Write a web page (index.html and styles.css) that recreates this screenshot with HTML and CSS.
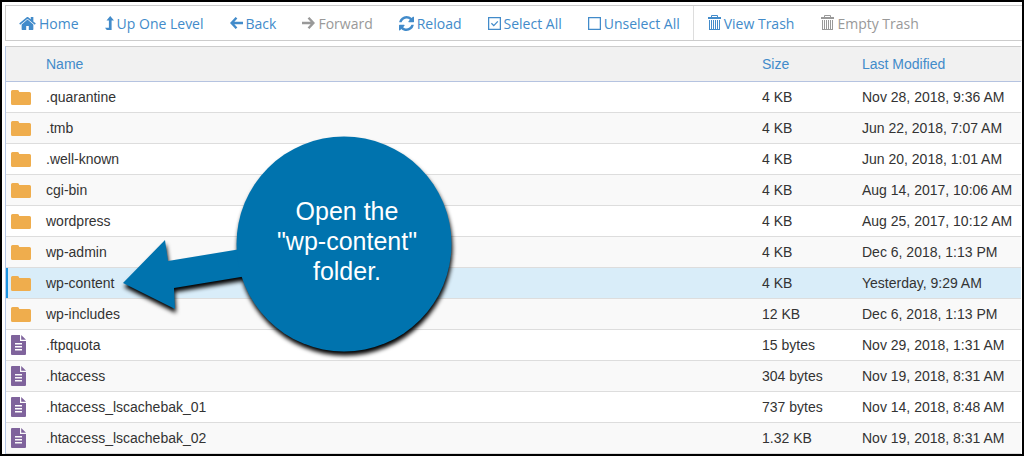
FILE: index.html
```
<!DOCTYPE html>
<html lang="en">
<head>
    <meta charset="UTF-8">
    <meta name="viewport" content="width=device-width, initial-scale=1.0">
    <title>File Manager</title>
    <link rel="stylesheet" href="styles.css">
</head>
<body>
    <!-- Shared icons for the file list -->
    <svg class="sprite" aria-hidden="true">
        <symbol id="folder" viewBox="0 0 20 15">
            <path d="M0 1.5Q0 0 1.5 0H6.5Q8 0 8.3 2H18.5Q20 2 20 3.5V13.5Q20 15 18.5 15H1.5Q0 15 0 13.5Z"/>
        </symbol>
        <symbol id="file" viewBox="0 0 15 20">
            <path fill-rule="evenodd" d="M1 0H9V6H15V19Q15 20 14 20H1Q0 20 0 19V1Q0 0 1 0ZM4 8V9.5H11V8ZM4 11V12.5H11V11ZM4 14V15.5H11V14Z"/>
            <path d="M10.2 0L15 4.8H10.2Z"/>
        </symbol>
        <symbol id="trash" viewBox="0 0 14 16">
            <path fill="none" stroke="currentColor" d="M4.5 2.500V.5H10.5V2.500M2.500 5V14.5H12.5V5M4.500 5V14M6.500 5V14M8.500 5V14M10.500 5V14"/>
            <path d="M1 2H14V4H1ZM2 14H13V15H2Z"/>
        </symbol>
    </svg>

    <div class="window">
        <div class="toolbar">
            <button type="button">
                <svg width="17" height="13" viewBox="89 256 1614 1280"><path d="M1472 992v480q0 26-19 45t-45 19h-384v-384h-256v384h-384q-26 0-45-19t-19-45v-480q0-1 .5-3t.5-3l575-474 575 474q1 2 1 6zm223-69l-62 74q-8 9-21 11h-3q-13 0-21-7l-692-577-692 577q-12 8-24 7-13-2-21-11l-62-74q-8-10-7-23.5t11-21.5l719-599q32-26 76-26t76 26l244 204v-195q0-14 9-23t23-9h192q14 0 23 9t9 23v408l219 182q10 8 11 21.5t-7 23.5z"/></svg>
                Home
            </button>
            <button type="button">
                <svg width="9" height="14" viewBox="0 0 9 14"><path d="M5.2 0L9 4.6H6.6V14H1.8L0 11.8H3.9V4.6H1.5Z"/></svg>
                Up One Level
            </button>
            <button type="button">
                <svg width="13" height="12" viewBox="0 0 13 12"><path class="line" d="M6.5 .8L1.6 6L6.5 11.2M1.8 6H13"/></svg>
                Back
            </button>
            <button type="button" disabled>
                <svg width="13" height="12" viewBox="0 0 13 12"><path class="line" d="M6.5 .8L11.4 6L6.5 11.2M11.2 6H0"/></svg>
                Forward
            </button>
            <button type="button">
                <svg width="15" height="15" viewBox="128 128 1536 1536"><path d="M1639 1056q0 5-1 7-64 268-268 434.5t-478 166.5q-146 0-282.5-55t-243.5-157l-129 129q-19 19-45 19t-45-19-19-45v-448q0-26 19-45t45-19h448q26 0 45 19t19 45-19 45l-137 137q71 66 161 102t187 36q134 0 250-65t186-179q11-17 53-117 8-23 30-23h192q13 0 22.5 9.5t9.5 22.5zm25-800v448q0 26-19 45t-45 19h-448q-26 0-45-19t-19-45 19-45l138-138q-148-137-349-137-134 0-250 65t-186 179q-11 17-53 117-8 23-30 23h-199q-13 0-22.5-9.5t-9.5-22.5v-7q65-268 270-434.5t480-166.5q146 0 284 55.5t245 156.5l130-129q19-19 45-19t45 19 19 45z"/></svg>
                Reload
            </button>
            <button type="button">
                <svg width="13" height="13" viewBox="0 0 13 13"><path class="box" d="M.6 .6H12.4V12.4H.6ZM3.4 6.2L5.8 8.6L9.8 4.4"/></svg>
                Select All
            </button>
            <button type="button">
                <svg width="13" height="13" viewBox="0 0 13 13"><path class="box" d="M.6 .6H12.4V12.4H.6Z"/></svg>
                Unselect All
            </button>
            <button type="button" class="divided">
                <svg width="14" height="16"><use href="#trash"/></svg>
                View Trash
            </button>
            <button type="button" disabled>
                <svg width="14" height="16"><use href="#trash"/></svg>
                Empty Trash
            </button>
        </div>

        <div class="listing">
            <table>
                <colgroup>
                    <col class="col-icon">
                    <col>
                    <col class="col-size">
                    <col class="col-date">
                </colgroup>
                <thead>
                    <tr><th></th><th>Name</th><th>Size</th><th>Last Modified</th></tr>
                </thead>
                <tbody>
                    <tr><td><svg class="folder"><use href="#folder"/></svg></td><td>.quarantine</td><td>4 KB</td><td>Nov 28, 2018, 9:36 AM</td></tr>
                    <tr><td><svg class="folder"><use href="#folder"/></svg></td><td>.tmb</td><td>4 KB</td><td>Jun 22, 2018, 7:07 AM</td></tr>
                    <tr><td><svg class="folder"><use href="#folder"/></svg></td><td>.well-known</td><td>4 KB</td><td>Jun 20, 2018, 1:01 AM</td></tr>
                    <tr><td><svg class="folder"><use href="#folder"/></svg></td><td>cgi-bin</td><td>4 KB</td><td>Aug 14, 2017, 10:06 AM</td></tr>
                    <tr><td><svg class="folder"><use href="#folder"/></svg></td><td>wordpress</td><td>4 KB</td><td>Aug 25, 2017, 10:12 AM</td></tr>
                    <tr><td><svg class="folder"><use href="#folder"/></svg></td><td>wp-admin</td><td>4 KB</td><td>Dec 6, 2018, 1:13 PM</td></tr>
                    <tr class="selected"><td><svg class="folder"><use href="#folder"/></svg></td><td>wp-content</td><td>4 KB</td><td>Yesterday, 9:29 AM</td></tr>
                    <tr><td><svg class="folder"><use href="#folder"/></svg></td><td>wp-includes</td><td>12 KB</td><td>Dec 6, 2018, 1:13 PM</td></tr>
                    <tr><td><svg class="file"><use href="#file"/></svg></td><td>.ftpquota</td><td>15 bytes</td><td>Nov 29, 2018, 1:31 AM</td></tr>
                    <tr><td><svg class="file"><use href="#file"/></svg></td><td>.htaccess</td><td>304 bytes</td><td>Nov 19, 2018, 8:31 AM</td></tr>
                    <tr><td><svg class="file"><use href="#file"/></svg></td><td>.htaccess_lscachebak_01</td><td>737 bytes</td><td>Nov 14, 2018, 8:48 AM</td></tr>
                    <tr><td><svg class="file"><use href="#file"/></svg></td><td>.htaccess_lscachebak_02</td><td>1.32 KB</td><td>Nov 19, 2018, 8:31 AM</td></tr>
                </tbody>
            </table>

            <!-- Callout pointing at the selected folder -->
            <div class="callout">
                <svg width="330" height="216" viewBox="0 0 330 216">
                    <path d="M0 147L42 104L45 125L130 111V139L51 152L52 173Z"/>
                    <circle cx="221" cy="108" r="107.5"/>
                </svg>
                <p>Open the<br>"wp-content"<br>folder.</p>
            </div>
        </div>
    </div>
</body>
</html>
```
FILE: styles.css
```
* {
    box-sizing: border-box;
}
body {
    margin: 0;
    font-family: "Liberation Sans", Arial, sans-serif;
    font-size: 14px;
    color: #333;
    background-color: #fff;
}
svg {
    display: block;
    flex: none;
    fill: currentColor;
}
.sprite {
    position: absolute;
    width: 0;
    height: 0;
}
.window {
    min-height: 100vh;
    padding: 3px 0 0 3px;
    border: 2px solid #000;
}
.toolbar {
    display: flex;
    height: 36px;
    margin-bottom: 5px;
    border: 1px solid #ccc;
    border-right: none;
}
.toolbar button {
    display: flex;
    align-items: center;
    gap: 3px;
    padding: 0 13px;
    border: none;
    background: none;
    color: #428bca;
    font-family: "Open Sans", sans-serif;
    font-size: 14px;
    white-space: nowrap;
    cursor: pointer;
}
.toolbar button:disabled {
    color: #999;
    cursor: default;
}
.toolbar .divided {
    border-left: 1px solid #ddd;
}
.line {
    fill: none;
    stroke: currentColor;
    stroke-width: 2.4;
}
.box {
    fill: none;
    stroke: currentColor;
    stroke-width: 1.3;
}
.listing {
    position: relative;
    margin-right: 1px;
}
table {
    width: 100%;
    table-layout: fixed;
    border-collapse: separate;
    border-spacing: 0;
    border-left: 1px solid #b5c7e6;
}
.col-icon {
    width: 40px;
}
.col-size {
    width: 100px;
}
.col-date {
    width: 159px;
}
th, td {
    padding: 0;
    text-align: left;
    white-space: nowrap;
}
th {
    height: 36px;
    border-top: 1px solid #ccc;
    border-bottom: 1px solid #b5c3e0;
    background-color: #f1f1f1;
    color: #428bca;
    font-weight: normal;
}
td {
    height: 31px;
    border-bottom: 1px solid #ddd;
}
td:first-child {
    padding-left: 5px;
}
tbody tr:nth-child(even) {
    background-color: #f9f9f9;
}
tbody tr.selected {
    background-color: #d9edf9;
}
.selected td:first-child {
    box-shadow: inset 2px 0 #1c94e0;
}
.folder {
    width: 20px;
    height: 15px;
    color: #efad4d;
}
.file {
    width: 15px;
    height: 20px;
    color: #7f639c;
}
.callout {
    position: absolute;
    top: 90px;
    left: 118px;
    color: #0073ae;
}
.callout svg {
    filter: drop-shadow(1px 4px 2px #000);
}
.callout p {
    position: absolute;
    top: 60px;
    left: 114px;
    width: 220px;
    margin: 0;
    color: #fff;
    font-size: 25px;
    line-height: 30px;
    text-align: center;
}
```
